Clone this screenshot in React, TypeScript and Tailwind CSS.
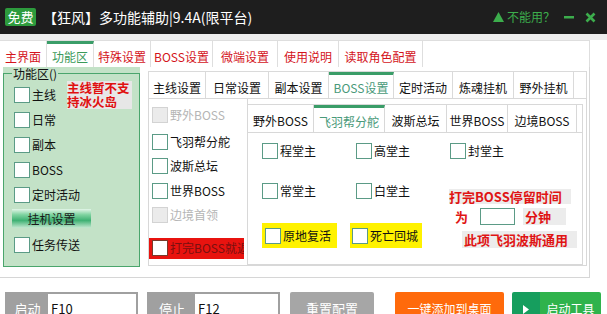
import React from 'react';

type Tab = { label: string; w: number; active?: boolean };

const topTabs: Tab[] = [
  { label: '主界面', w: 47 },
  { label: '功能区', w: 47, active: true },
  { label: '特殊设置', w: 57 },
  { label: 'BOSS设置', w: 62 },
  { label: '微端设置', w: 65 },
  { label: '使用说明', w: 61 },
  { label: '读取角色配置', w: 84 },
];

const midTabs: Tab[] = [
  { label: '主线设置', w: 57 },
  { label: '日常设置', w: 63 },
  { label: '副本设置', w: 60 },
  { label: 'BOSS设置', w: 65, active: true },
  { label: '定时活动', w: 59 },
  { label: '炼魂挂机', w: 61 },
  { label: '野外挂机', w: 60 },
];

const subTabs: Tab[] = [
  { label: '野外BOSS', w: 66 },
  { label: '飞羽帮分舵', w: 71, active: true },
  { label: '波斯总坛', w: 62 },
  { label: '世界BOSS', w: 61 },
  { label: '边境BOSS', w: 69 },
];

const Check: React.FC<{ label: string; disabled?: boolean }> = ({ label, disabled }) => (
  <div className="flex items-center h-[16px] shrink-0">
    <span
      className={`w-[16px] h-[16px] shrink-0 border ${
        disabled ? 'border-[#d3d3d3] bg-[#ebebeb]' : 'border-[#5b9b86] bg-white'
      }`}
    />
    <span className={`ml-[2px] text-[12px] leading-[16px] whitespace-nowrap ${disabled ? 'text-[#b5b5b5]' : 'text-[#111]'}`}>
      {label}
    </span>
  </div>
);

const App: React.FC = () => {
  return (
    <div className="w-[607px] h-[314px] overflow-hidden bg-white font-['Noto_Sans_CJK_SC','Liberation_Sans',sans-serif]">
      {/* title bar */}
      <div className="h-[34px] bg-[#1e1e1e] flex items-center">
        <div className="ml-[5px] w-[31px] h-[18px] bg-[#2d9b3d] rounded-[2px] text-white text-[13px] leading-[18px] text-center">
          免费
        </div>
        <div className="ml-[7px] text-white text-[14px] leading-[18px] whitespace-nowrap">【狂风】多功能辅助|9.4A(限平台)</div>
        <div className="ml-auto mr-[11px] flex items-center text-[#3cad4c]">
          <svg width="11" height="10" viewBox="0 0 11 10">
            <polygon points="5.5,0 11,10 0,10" fill="#3cad4c" />
          </svg>
          <span className="ml-[3px] text-[12px] leading-[16px]">不能用？</span>
          <svg className="ml-[9px]" width="10" height="10" viewBox="0 0 10 10">
            <rect x="0" y="4" width="10" height="2.5" fill="#3cad4c" />
          </svg>
          <svg className="ml-[11px]" width="11" height="11" viewBox="0 0 11 11">
            <path d="M1.5 1.5 L9.5 9.5 M9.5 1.5 L1.5 9.5" stroke="#3cad4c" strokeWidth="2.6" />
          </svg>
        </div>
      </div>
      <div className="h-[6px] bg-[#eeeeee]" />

      {/* top tabs */}
      <div className="w-[590px] h-[27px] flex border-t border-r border-[#dedede]">
        {topTabs.map((t) => (
          <div
            key={t.label}
            style={{ width: t.w }}
            className={`h-full shrink-0 border-r border-[#dedede] flex items-center justify-center text-[12px] leading-[14px] whitespace-nowrap ${
              t.active ? 'border-t-[3px] border-t-[#3a9d68] text-[#3a9a5a] pt-[3px]' : 'text-[#d4141c] pt-[6px]'
            }`}
          >
            {t.label}
          </div>
        ))}
        <div className="flex-1" />
      </div>

      {/* first level content */}
      <div className="w-[590px] h-[211px] flex border-r border-b border-[#d6d6d6]">
        {/* left group */}
        <div className="ml-[3px] w-[137px] h-[200px] bg-[#c3e2c7]">
          <fieldset className="h-full border border-[#4aa56c] px-0">
            <legend className="ml-[8px] px-[1px] text-[12px] leading-[13px] text-[#111]">功能区()</legend>
            <div className="flex flex-col gap-[9px] pl-[10px] pt-[7px]">
              <div className="flex items-center h-[16px]">
                <Check label="主线" />
                <div className="ml-[11px] w-[65px] h-[28px] shrink-0 bg-[#e7e7e7] text-[#e01010] font-bold text-[12.5px] leading-[14px] whitespace-nowrap">
                  主线暂不支
                  <br />
                  持冰火岛
                </div>
              </div>
              <Check label="日常" />
              <Check label="副本" />
              <Check label="BOSS" />
              <Check label="定时活动" />
              <div className="-ml-[2px] -mt-[3px] w-[79px] h-[19px] bg-[linear-gradient(to_bottom,#e3f5e8_0%,#7fd3a0_30%,#3fb173_60%,#c4e8d0_100%)] text-[12px] leading-[19px] text-[#1a1a1a] text-center">
                挂机设置
              </div>
              <Check label="任务传送" />
            </div>
          </fieldset>
        </div>

        {/* second level panel */}
        <div className="ml-[8px] mt-[4px] w-[439px] flex flex-col">
          <div className="h-[27px] flex border-t border-l border-r border-[#dadada]">
            {midTabs.map((t) => (
              <div
                key={t.label}
                style={{ width: t.w }}
                className={`h-full shrink-0 border-r border-[#dadada] flex items-center justify-center text-[12px] leading-[14px] whitespace-nowrap ${
                  t.active ? 'border-t-[3px] border-t-[#3a9d68] text-[#4a9a7a] pt-[2px]' : 'text-[#111] pt-[5px]'
                }`}
              >
                {t.label}
              </div>
            ))}
            <div className="flex-1" />
          </div>

          <div className="h-[168px] flex border border-[#d8d8d8]">
            {/* left column */}
            <div className="w-[99px] shrink-0 border-r border-[#d8d8d8] flex flex-col gap-[8.5px] pt-[8px] pl-[3px]">
              <Check label="野外BOSS" disabled />
              <div className="mt-[2px]">
                <Check label="飞羽帮分舵" />
              </div>
              <Check label="波斯总坛" />
              <Check label="世界BOSS" />
              <Check label="边境首领" disabled />
              <div className="-ml-[3px] mt-[6px] w-[95px] h-[21px] bg-[#e8130f] flex items-center pl-[3px] overflow-hidden">
                <span className="w-[16px] h-[16px] shrink-0 border border-[#7a3a2a] bg-white" />
                <span className="ml-[2px] text-[12px] leading-[16px] whitespace-nowrap text-[#7a1010]">打完BOSS就返回</span>
              </div>
            </div>

            {/* third level panel */}
            <div className="mt-[5px] w-[335px] flex flex-col">
              <div className="h-[28px] flex border-t border-r border-[#d8d8d8]">
                {subTabs.map((t) => (
                  <div
                    key={t.label}
                    style={{ width: t.w }}
                    className={`h-full shrink-0 border-r border-[#d8d8d8] flex items-center justify-center text-[12px] leading-[14px] whitespace-nowrap ${
                      t.active ? 'border-t-[3px] border-t-[#3a9d68] text-[#4a9a7a] pt-[3px]' : 'text-[#111] pt-[5px]'
                    }`}
                  >
                    {t.label}
                  </div>
                ))}
                <div className="flex-1" />
              </div>
              <div className="h-[133px] border-t border-r border-b border-[#d8d8d8] bg-white grid grid-cols-[94px_94px_1fr] grid-rows-[16px_16px_25px] gap-y-[24px] pl-[14px] pt-[10px]">
                <Check label="程堂主" />
                <Check label="高堂主" />
                <Check label="封堂主" />
                <Check label="常堂主" />
                <Check label="白堂主" />
                <div className="row-span-2 -ml-[1px] mt-[6px] flex flex-col text-[#e01414] font-bold text-[13px] leading-[15px]">
                  <div className="w-[122px] bg-[#ececec] whitespace-nowrap">打完BOSS停留时间</div>
                  <div className="mt-[4px] h-[17px] flex items-center">
                    <span className="ml-[6px]">为</span>
                    <span className="ml-[12px] w-[35px] h-[17px] border border-[#5b9b86] bg-white" />
                    <span className="ml-[8px] w-[43px] h-[17px] bg-[#ececec] pl-[2px] leading-[17px]">分钟</span>
                  </div>
                  <div className="mt-[6px] ml-[13px] w-[115px] bg-[#ececec] whitespace-nowrap pl-[2px] leading-[17px]">此项飞羽波斯通用</div>
                </div>
                <div className="w-[75px] h-[25px] bg-[#fff200] flex items-center pl-[3px]">
                  <Check label="原地复活" />
                </div>
                <div className="-ml-[6px] w-[72px] h-[25px] bg-[#fff200] flex items-center pl-[2px]">
                  <Check label="死亡回城" />
                </div>
              </div>
            </div>
          </div>
        </div>
      </div>

      {/* bottom controls */}
      <div className="mt-[14px] h-[30px] flex text-[13px]">
        <div className="ml-[5px] w-[133px] h-full flex border-2 border-[#a0a0a0]">
          <div className="w-[41px] bg-[#a0a0a0] text-white flex items-center justify-center pt-[4px]">启动</div>
          <div className="flex-1 bg-white text-[#111] pl-[3px] flex items-center pt-[4px]">F10</div>
        </div>
        <div className="ml-[9px] w-[133px] h-full flex border-2 border-[#a0a0a0]">
          <div className="w-[46px] bg-[#a0a0a0] text-white flex items-center justify-center pt-[4px]">停止</div>
          <div className="flex-1 bg-white text-[#111] pl-[3px] flex items-center pt-[4px]">F12</div>
        </div>
        <div className="ml-[10px] w-[84px] h-full rounded-[2px] bg-[#a6a6a6] text-white flex items-center justify-center pt-[4px]">
          重置配置
        </div>
        <div className="ml-[21px] w-[109px] h-full rounded-[2px] bg-[#ff6a0b] text-white text-[12px] flex items-center justify-center pt-[4px]">
          一键添加到桌面
        </div>
        <div className="ml-[8px] w-[89px] h-full rounded-[2px] overflow-hidden flex text-white">
          <div className="w-[28px] bg-[#169e5e] flex items-center justify-center pt-[4px]">
            <svg width="6" height="9" viewBox="0 0 6 9">
              <polygon points="0,0 6,4.5 0,9" fill="#ffffff" />
            </svg>
          </div>
          <div className="flex-1 bg-[#2fb34c] flex items-center justify-center text-[12px] pt-[4px]">启动工具</div>
        </div>
      </div>
    </div>
  );
};

export default App;
